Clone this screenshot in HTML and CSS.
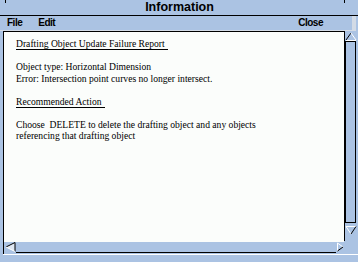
FILE: index.html
```html
<!DOCTYPE html>
<html lang="en">
<head>
    <meta charset="UTF-8">
    <title>Information</title>
    <link rel="stylesheet" href="styles.css">
</head>
<body>
    <div class="window">
        <div class="titlebar">Information</div>
        <div class="menubar">
            <span class="menu">File</span>
            <span class="menu">Edit</span>
            <span class="menu menu-close">Close</span>
        </div>
        <div class="main">
            <div class="pane">
                <div class="text">
                    <p><span class="heading">Drafting Object Update Failure Report</span></p>
                    <p>Object type: Horizontal Dimension<br>Error: Intersection point curves no longer intersect.</p>
                    <p><span class="heading">Recommended Action</span></p>
                    <p>Choose &nbsp;DELETE to delete the drafting object and any objects<br>referencing that drafting object</p>
                </div>
                <div class="hscroll">
                    <svg class="arrow-left" width="11" height="10" viewBox="0 0 11 10">
                        <polygon points="1,5 10,0.5 10,9.5" fill="#dfe7f2"/>
                        <line x1="1" y1="5" x2="10" y2="0.5" stroke="#000" stroke-width="1"/>
                        <line x1="10" y1="0.5" x2="10" y2="9.5" stroke="#000" stroke-width="1"/>
                        <line x1="1" y1="5" x2="10" y2="9.5" stroke="#fff" stroke-width="1"/>
                    </svg>
                    <div class="htrack"></div>
                    <svg class="arrow-right" width="8" height="10" viewBox="0 0 8 10">
                        <line x1="1.5" y1="1" x2="1.5" y2="9" stroke="#fff" stroke-width="1"/>
                        <line x1="1.5" y1="1" x2="7" y2="5" stroke="#fff" stroke-width="1"/>
                        <line x1="1.5" y1="9" x2="7" y2="5" stroke="#000" stroke-width="1"/>
                    </svg>
                </div>
            </div>
            <div class="vscroll">
                <div class="vtrack">
                    <svg class="arrow-up" width="12" height="9" viewBox="0 0 12 9">
                        <line x1="1" y1="8" x2="6" y2="1" stroke="#000" stroke-width="1"/>
                        <line x1="6" y1="1" x2="11" y2="8" stroke="#fff" stroke-width="1"/>
                        <line x1="1" y1="8.5" x2="11" y2="8.5" stroke="#fff" stroke-width="1"/>
                    </svg>
                    <div class="thumb"></div>
                    <svg class="arrow-down" width="12" height="9" viewBox="0 0 12 9">
                        <line x1="1" y1="0.5" x2="11" y2="0.5" stroke="#fff" stroke-width="1"/>
                        <line x1="1" y1="0.5" x2="6" y2="8" stroke="#fff" stroke-width="1"/>
                        <line x1="11" y1="0.5" x2="6" y2="8" stroke="#000" stroke-width="1"/>
                    </svg>
                </div>
            </div>
        </div>
        <div class="footer"></div>
    </div>
</body>
</html>
```

FILE: styles.css
```css
/* base */
body {
    margin: 0;
    padding: 0;
    background-color: #abc3e3;
    font-family: 'Liberation Sans', Arial, sans-serif;
}
.window {
    width: 358px;
    height: 262px;
    display: flex;
    flex-direction: column;
    overflow: hidden;
}
/* title bar */
.titlebar {
    position: relative;
    height: 15px;
    line-height: 15px;
    border-bottom: 1px solid #000;
    text-align: center;
    font-size: 12.5px;
    font-weight: bold;
    color: #000;
    padding-left: 1px;
}
.titlebar::before,
.titlebar::after {
    content: "";
    position: absolute;
    top: 0;
    width: 1px;
    height: 3px;
    background-color: #000;
}
.titlebar::before { left: 5px; }
.titlebar::after { left: 344px; }
/* menu bar */
.menubar {
    height: 14px;
    line-height: 14px;
    display: flex;
    padding-left: 7px;
    padding-right: 29px;
    margin-right: 2px;
    border-right: 4px solid #d3dbe6;
    border-bottom: 1px solid #d3dbe6;
    font-size: 10px;
    font-weight: bold;
    letter-spacing: -0.5px;
}
.menu {
    margin-right: 16px;
}
.menu-close {
    margin-left: auto;
    margin-right: 0;
}
/* main area */
.main {
    display: flex;
    height: 223px;
    padding-left: 3px;
}
.pane {
    flex: 1;
    display: flex;
    flex-direction: column;
    border-left: 1px solid #000;
}
.text {
    flex: 1;
    background-color: #fbfdfb;
    border-top: 1px solid #000;
    padding: 6px 0 0 12px;
    font-family: 'Liberation Serif', 'Times New Roman', serif;
    font-size: 9.6px;
    line-height: 11.5px;
    color: #000;
    white-space: nowrap;
}
.text p {
    margin: 0 0 11.5px 0;
}
.heading {
    border-bottom: 1px solid #000;
    padding-right: 3px;
}
/* horizontal scrollbar */
.hscroll {
    display: flex;
    height: 11px;
    margin-bottom: 1px;
    padding-left: 1px;
}
.arrow-left {
    display: block;
}
.htrack {
    flex: 1;
    border-bottom: 1px solid #000;
}
.arrow-right {
    display: block;
}
/* vertical scrollbar */
.vscroll {
    width: 13px;
    margin-right: 1px;
}
.vtrack {
    height: 209px;
    border-left: 1px solid #000;
    display: flex;
    flex-direction: column;
    padding-top: 1px;
}
.arrow-up,
.arrow-down {
    display: block;
}
.thumb {
    width: 9px;
    height: 180px;
    border: 1px solid #000;
    margin-bottom: 3px;
}
/* bottom strip */
.footer {
    margin-left: 3px;
    border-top: 1px solid #fff;
    flex: 1;
}
```
